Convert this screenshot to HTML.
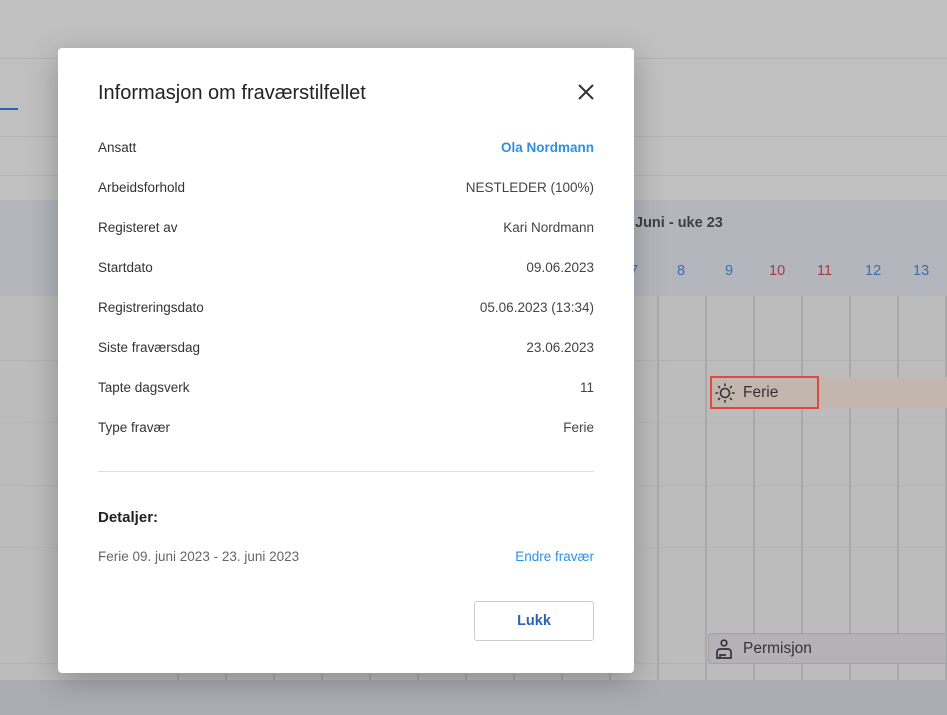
<!DOCTYPE html>
<html><head><meta charset="utf-8"><style>
*{margin:0;padding:0;box-sizing:border-box}
body{width:947px;height:715px;overflow:hidden;background:#c0c0c0;font-family:"Liberation Sans",sans-serif;position:relative}
.abs{position:absolute}
.vl{position:absolute;width:2px;background:#aaaaaa}
.hl{position:absolute;height:1px;background:#b3b3b3}
.dlg{position:absolute;left:58px;top:48px;width:576px;height:625px;background:#fff;border-radius:4px;box-shadow:0 8px 30px rgba(0,0,0,.25)}
.row{position:absolute;left:40px;right:40px;font-size:13.5px;color:#333;display:flex;justify-content:space-between}
.row span:last-child{color:#444}
</style></head><body>
<div class="abs" style="left:0;top:58px;width:947px;height:1px;background:#b3b3b3"></div>
<div class="abs" style="left:0;top:108px;width:18px;height:2px;background:#2a64b0"></div>
<div class="abs" style="left:0;top:136px;width:947px;height:1px;background:#b3b3b3"></div>
<div class="abs" style="left:0;top:175px;width:947px;height:1px;background:#b3b3b3"></div>
<div class="abs" style="left:0;top:200px;width:947px;height:96px;background:#b3b6bc"></div>
<div class="abs" style="left:0;top:296px;width:947px;height:384px;background:#bcbcbc"></div>
<div class="abs" style="left:0;top:680px;width:947px;height:35px;background:#aaadb3"></div>
<div class="hl" style="left:0;top:360px;width:947px"></div>
<div class="hl" style="left:0;top:422px;width:947px;background:#b6b6b6"></div>
<div class="hl" style="left:0;top:485px;width:947px;background:#b6b6b6"></div>
<div class="hl" style="left:0;top:547px;width:947px;background:#b6b6b6"></div>
<div class="hl" style="left:0;top:663px;width:947px"></div>
<div class="vl" style="left:657px;top:296px;height:384px"></div>
<div class="vl" style="left:705px;top:296px;height:384px"></div>
<div class="vl" style="left:753px;top:296px;height:384px"></div>
<div class="vl" style="left:801px;top:296px;height:384px"></div>
<div class="vl" style="left:849px;top:296px;height:384px"></div>
<div class="vl" style="left:897px;top:296px;height:384px"></div>
<div class="vl" style="left:945px;top:296px;height:384px"></div>
<div class="vl" style="left:177px;top:660px;height:20px"></div>
<div class="vl" style="left:225px;top:660px;height:20px"></div>
<div class="vl" style="left:273px;top:660px;height:20px"></div>
<div class="vl" style="left:321px;top:660px;height:20px"></div>
<div class="vl" style="left:369px;top:660px;height:20px"></div>
<div class="vl" style="left:417px;top:660px;height:20px"></div>
<div class="vl" style="left:465px;top:660px;height:20px"></div>
<div class="vl" style="left:513px;top:660px;height:20px"></div>
<div class="vl" style="left:561px;top:660px;height:20px"></div>
<div class="vl" style="left:609px;top:660px;height:20px"></div>
<div class="abs" style="left:635px;top:215px;font-size:14.5px;font-weight:bold;color:#3d3f44">Juni - uke 23</div>
<div class="abs" style="top:263px;left:0;width:947px;font-size:14.5px">
<span class="abs" style="left:630px;color:#3a6fb3">7</span>
<span class="abs" style="left:677px;color:#3a6fb3">8</span>
<span class="abs" style="left:725px;color:#3a6fb3">9</span>
<span class="abs" style="left:769px;color:#a8384a">10</span>
<span class="abs" style="left:817px;color:#a8384a">11</span>
<span class="abs" style="left:865px;color:#3a6fb3">12</span>
<span class="abs" style="left:913px;color:#3a6fb3">13</span>
</div>
<div class="abs" style="left:710px;top:377px;width:237px;height:31px;background:#c2b6af"></div>
<div class="abs" style="left:710px;top:376px;width:109px;height:33px;border:2px solid #e0483f"></div>
<svg class="abs" style="left:714px;top:382px" width="22" height="22" viewBox="0 0 22 22" fill="none" stroke="#333" stroke-width="1.6"><circle cx="11" cy="11" r="4.5"/><g stroke-linecap="round"><path d="M11 2v1.5M11 18.5v1.5M2 11h1.5M18.5 11h1.5M4.6 4.6l1 1M16.4 16.4l1 1M4.6 17.4l1-1M16.4 5.6l1-1"/></g></svg>
<div class="abs" style="left:743px;top:384px;font-size:15.5px;color:#333">Ferie</div>
<div class="abs" style="left:708px;top:633px;width:239px;height:31px;background:#b4b2b6;border:1px solid #a3a3a6;border-radius:4px 0 0 4px"></div>
<svg class="abs" style="left:714px;top:638px" width="20" height="22" viewBox="0 0 20 22" fill="none" stroke="#333" stroke-width="1.7"><circle cx="10" cy="5" r="2.8"/><path d="M3 20v-6a3 3 0 0 1 3-3h8a3 3 0 0 1 3 3v6z"/><path d="M6 20v-3h6"/></svg>
<div class="abs" style="left:743px;top:640px;font-size:15.5px;color:#333">Permisjon</div>

<div class="dlg">
<div class="abs" style="left:40px;top:34px;font-size:20px;color:#222">Informasjon om fraværstilfellet</div>
<svg class="abs" style="left:519px;top:35px" width="18" height="18" viewBox="0 0 18 18" stroke="#333" stroke-width="2"><path d="M2 2l14 14M16 2L2 16"/></svg>
<div class="row" style="top:92px"><span>Ansatt</span><span style="color:#2f8fe0;font-weight:bold">Ola Nordmann</span></div>
<div class="row" style="top:132px"><span>Arbeidsforhold</span><span>NESTLEDER (100%)</span></div>
<div class="row" style="top:172px"><span>Registeret av</span><span>Kari Nordmann</span></div>
<div class="row" style="top:212px"><span>Startdato</span><span>09.06.2023</span></div>
<div class="row" style="top:252px"><span>Registreringsdato</span><span>05.06.2023 (13:34)</span></div>
<div class="row" style="top:292px"><span>Siste fraværsdag</span><span>23.06.2023</span></div>
<div class="row" style="top:332px"><span>Tapte dagsverk</span><span>11</span></div>
<div class="row" style="top:372px"><span>Type fravær</span><span>Ferie</span></div>
<div class="abs" style="left:40px;right:40px;top:423px;height:1px;background:#ddd"></div>
<div class="abs" style="left:40px;top:461px;font-size:15px;font-weight:bold;color:#222">Detaljer:</div>
<div class="row" style="top:501px"><span style="color:#666">Ferie 09. juni 2023 - 23. juni 2023</span><span style="color:#2f8fe0">Endre fravær</span></div>
<div class="abs" style="left:416px;top:553px;width:120px;height:40px;border:1px solid #ccc;border-radius:3px;display:flex;align-items:center;justify-content:center;font-size:14.5px;font-weight:bold;color:#2a64b0">Lukk</div>
</div>
</body></html>
